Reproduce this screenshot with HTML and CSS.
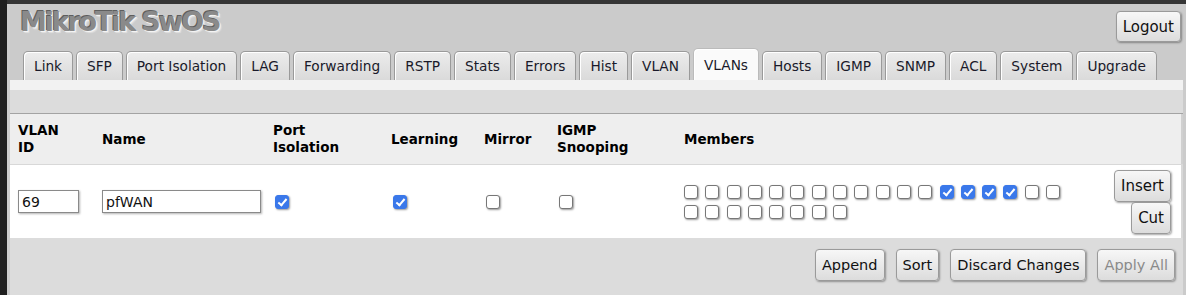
FILE: index.html
```html
<!DOCTYPE html>
<html>
<head>
<meta charset="utf-8">
<link rel="stylesheet" href="styles.css">
</head>
<body>
<div class="frame">
  <header class="top">
    <div class="brand">MikroTik SwOS</div>
    <button class="btn logout">Logout</button>
  </header>
  <nav class="tabs">
    <span class="tab">Link</span>
    <span class="tab">SFP</span>
    <span class="tab">Port Isolation</span>
    <span class="tab">LAG</span>
    <span class="tab">Forwarding</span>
    <span class="tab">RSTP</span>
    <span class="tab">Stats</span>
    <span class="tab">Errors</span>
    <span class="tab">Hist</span>
    <span class="tab">VLAN</span>
    <span class="tab active">VLANs</span>
    <span class="tab">Hosts</span>
    <span class="tab">IGMP</span>
    <span class="tab">SNMP</span>
    <span class="tab">ACL</span>
    <span class="tab">System</span>
    <span class="tab">Upgrade</span>
  </nav>
  <main class="panel">
    <div class="strip"></div>
    <div class="toolbar"></div>
    <div class="grid head">
      <div class="cell">VLAN<br>ID</div>
      <div class="cell">Name</div>
      <div class="cell">Port<br>Isolation</div>
      <div class="cell">Learning</div>
      <div class="cell">Mirror</div>
      <div class="cell">IGMP<br>Snooping</div>
      <div class="cell">Members</div>
      <div class="cell"></div>
    </div>
    <div class="grid row">
      <div class="cell"><input class="txt vid" type="text" value="69"></div>
      <div class="cell"><input class="txt name" type="text" value="pfWAN"></div>
      <div class="cell"><input class="cb" type="checkbox" checked></div>
      <div class="cell"><input class="cb" type="checkbox" checked></div>
      <div class="cell"><input class="cb" type="checkbox"></div>
      <div class="cell"><input class="cb" type="checkbox"></div>
      <div class="cell">
        <div class="members">
          <input class="cb" type="checkbox"><input class="cb" type="checkbox"><input class="cb" type="checkbox"><input class="cb" type="checkbox"><input class="cb" type="checkbox"><input class="cb" type="checkbox"><input class="cb" type="checkbox"><input class="cb" type="checkbox"><input class="cb" type="checkbox"><input class="cb" type="checkbox"><input class="cb" type="checkbox"><input class="cb" type="checkbox"><input class="cb" type="checkbox" checked><input class="cb" type="checkbox" checked><input class="cb" type="checkbox" checked><input class="cb" type="checkbox" checked><input class="cb" type="checkbox"><input class="cb" type="checkbox"><input class="cb" type="checkbox"><input class="cb" type="checkbox"><input class="cb" type="checkbox"><input class="cb" type="checkbox"><input class="cb" type="checkbox"><input class="cb" type="checkbox"><input class="cb" type="checkbox"><input class="cb" type="checkbox">
        </div>
      </div>
      <div class="cell actions">
        <button class="btn">Insert</button>
        <button class="btn">Cut</button>
      </div>
    </div>
    <div class="footer">
      <button class="btn">Append</button>
      <button class="btn">Sort</button>
      <button class="btn">Discard Changes</button>
      <button class="btn disabled">Apply All</button>
    </div>
  </main>
</div>
</body>
</html>
```
FILE: styles.css
```css
html, body {
  margin: 0;
  padding: 0;
  background: #1e1e1e;
  height: 100%;
  overflow: hidden;
}
body {
  font-family: "DejaVu Sans", Verdana, sans-serif;
  font-size: 14px;
  color: #111;
}
.frame {
  margin-left: 7px;
  border-top: 4px solid #353535;
  background: #cbcbcb;
  height: 291px;
}
.top {
  display: flex;
  justify-content: space-between;
  align-items: flex-start;
  height: 44px;
  padding: 0 5px 0 13px;
}
.brand {
  font-size: 27px;
  font-weight: bold;
  letter-spacing: -2.2px;
  color: #8a8a8a;
  margin-top: 2px;
  line-height: 31px;
  text-shadow: -1px -1px 0 #5e5e5e, 1px 1px 0 #f4f4f4, 2px 2px 1px #e0e0e0;
}
.btn {
  font-family: "DejaVu Sans", Verdana, sans-serif;
  font-size: 14px;
  color: #111;
  height: 32px;
  padding: 0 7px;
  border: 1px solid #9a9a9a;
  border-radius: 4px;
  background: linear-gradient(#f7f7f7, #dcdcdc);
  box-shadow: 1px 1px 2px rgba(0,0,0,0.35);
}
.logout {
  margin-top: 7px;
  height: 31px;
  font-size: 15px;
  padding: 0 6px;
}
.tabs {
  display: flex;
  align-items: flex-end;
  gap: 3px;
  padding-left: 16px;
  height: 32px;
}
.tab {
  height: 28px;
  line-height: 28px;
  padding: 0 10px;
  font-size: 13.7px;
  border: 1px solid #9a9a9a;
  border-bottom: none;
  border-radius: 5px 5px 0 0;
  background: linear-gradient(#ececec, #dadada);
  box-shadow: inset 1px 1px 0 #fff;
  color: #1a1a2a;
  white-space: nowrap;
}
.tab.active {
  height: 31px;
  line-height: 32px;
  background: #fafafa;
  border-color: #bbb;
}
.panel {
  margin: 0 3px;
}
.strip {
  height: 10px;
  background: #f2f2f2;
}
.toolbar {
  height: 23px;
  background: #dcdcdc;
  border-bottom: 1px solid #a3a3a3;
}
.grid {
  display: grid;
  grid-template-columns: 84px 171px 118px 93px 73px 127px 1fr auto;
  align-items: center;
}
.cell {
  padding-left: 8px;
}
.head {
  height: 50px;
  background: #eeeeee;
  border-bottom: 1px solid #d8d8d8;
  font-weight: bold;
  font-size: 13.5px;
  line-height: 17px;
  color: #000;
  box-shadow: inset -2px 0 0 #d0d0d0;
}
.row {
  height: 73px;
  background: #fff;
  box-shadow: inset -2px 0 0 #d8d8d8;
}
.txt {
  font-family: "DejaVu Sans", Verdana, sans-serif;
  font-size: 14px;
  height: 23px;
  box-sizing: border-box;
  border: 1px solid #8a8a8a;
  padding: 0 3px;
  margin: 0;
  box-shadow: 1px 1px 2px rgba(0,0,0,0.3);
  color: #111;
  display: block;
}
.vid { width: 61px; }
.name { width: 159px; }
.cb {
  -webkit-appearance: none;
  appearance: none;
  width: 14px;
  height: 14px;
  margin: 0;
  box-sizing: border-box;
  border: 1px solid #777;
  border-radius: 3px;
  background: #fff;
  box-shadow: 1px 1px 2px rgba(0,0,0,0.4);
  position: relative;
  display: block;
  margin-left: 2px;
}
.cb:checked {
  background: #3a78ea;
  border-color: #3a78ea;
}
.cb:checked::after {
  content: "";
  position: absolute;
  left: 4px;
  top: 1px;
  width: 3px;
  height: 7px;
  border-right: 2px solid #fff;
  border-bottom: 2px solid #fff;
  transform: rotate(40deg);
}
.members {
  display: flex;
  flex-wrap: wrap;
  width: 384px;
  row-gap: 6px;
  column-gap: 7.3px;
  margin-top: 1px;
}
.members .cb { margin-left: 0; }
.actions {
  display: flex;
  flex-direction: column;
  align-items: flex-end;
  align-self: start;
  padding-top: 5px;
  padding-right: 12px;
}
.actions .btn {
  height: 32px;
  padding: 0 6px;
  font-size: 15px;
}
.footer {
  display: flex;
  justify-content: flex-end;
  gap: 11px;
  padding: 11px 8px 0 0;
  background: #dcdcdc;
  height: 60px;
}
.footer .btn {
  font-size: 14.5px;
  padding: 0 6px;
}
.btn.disabled {
  color: #8a8a8a;
}
```
